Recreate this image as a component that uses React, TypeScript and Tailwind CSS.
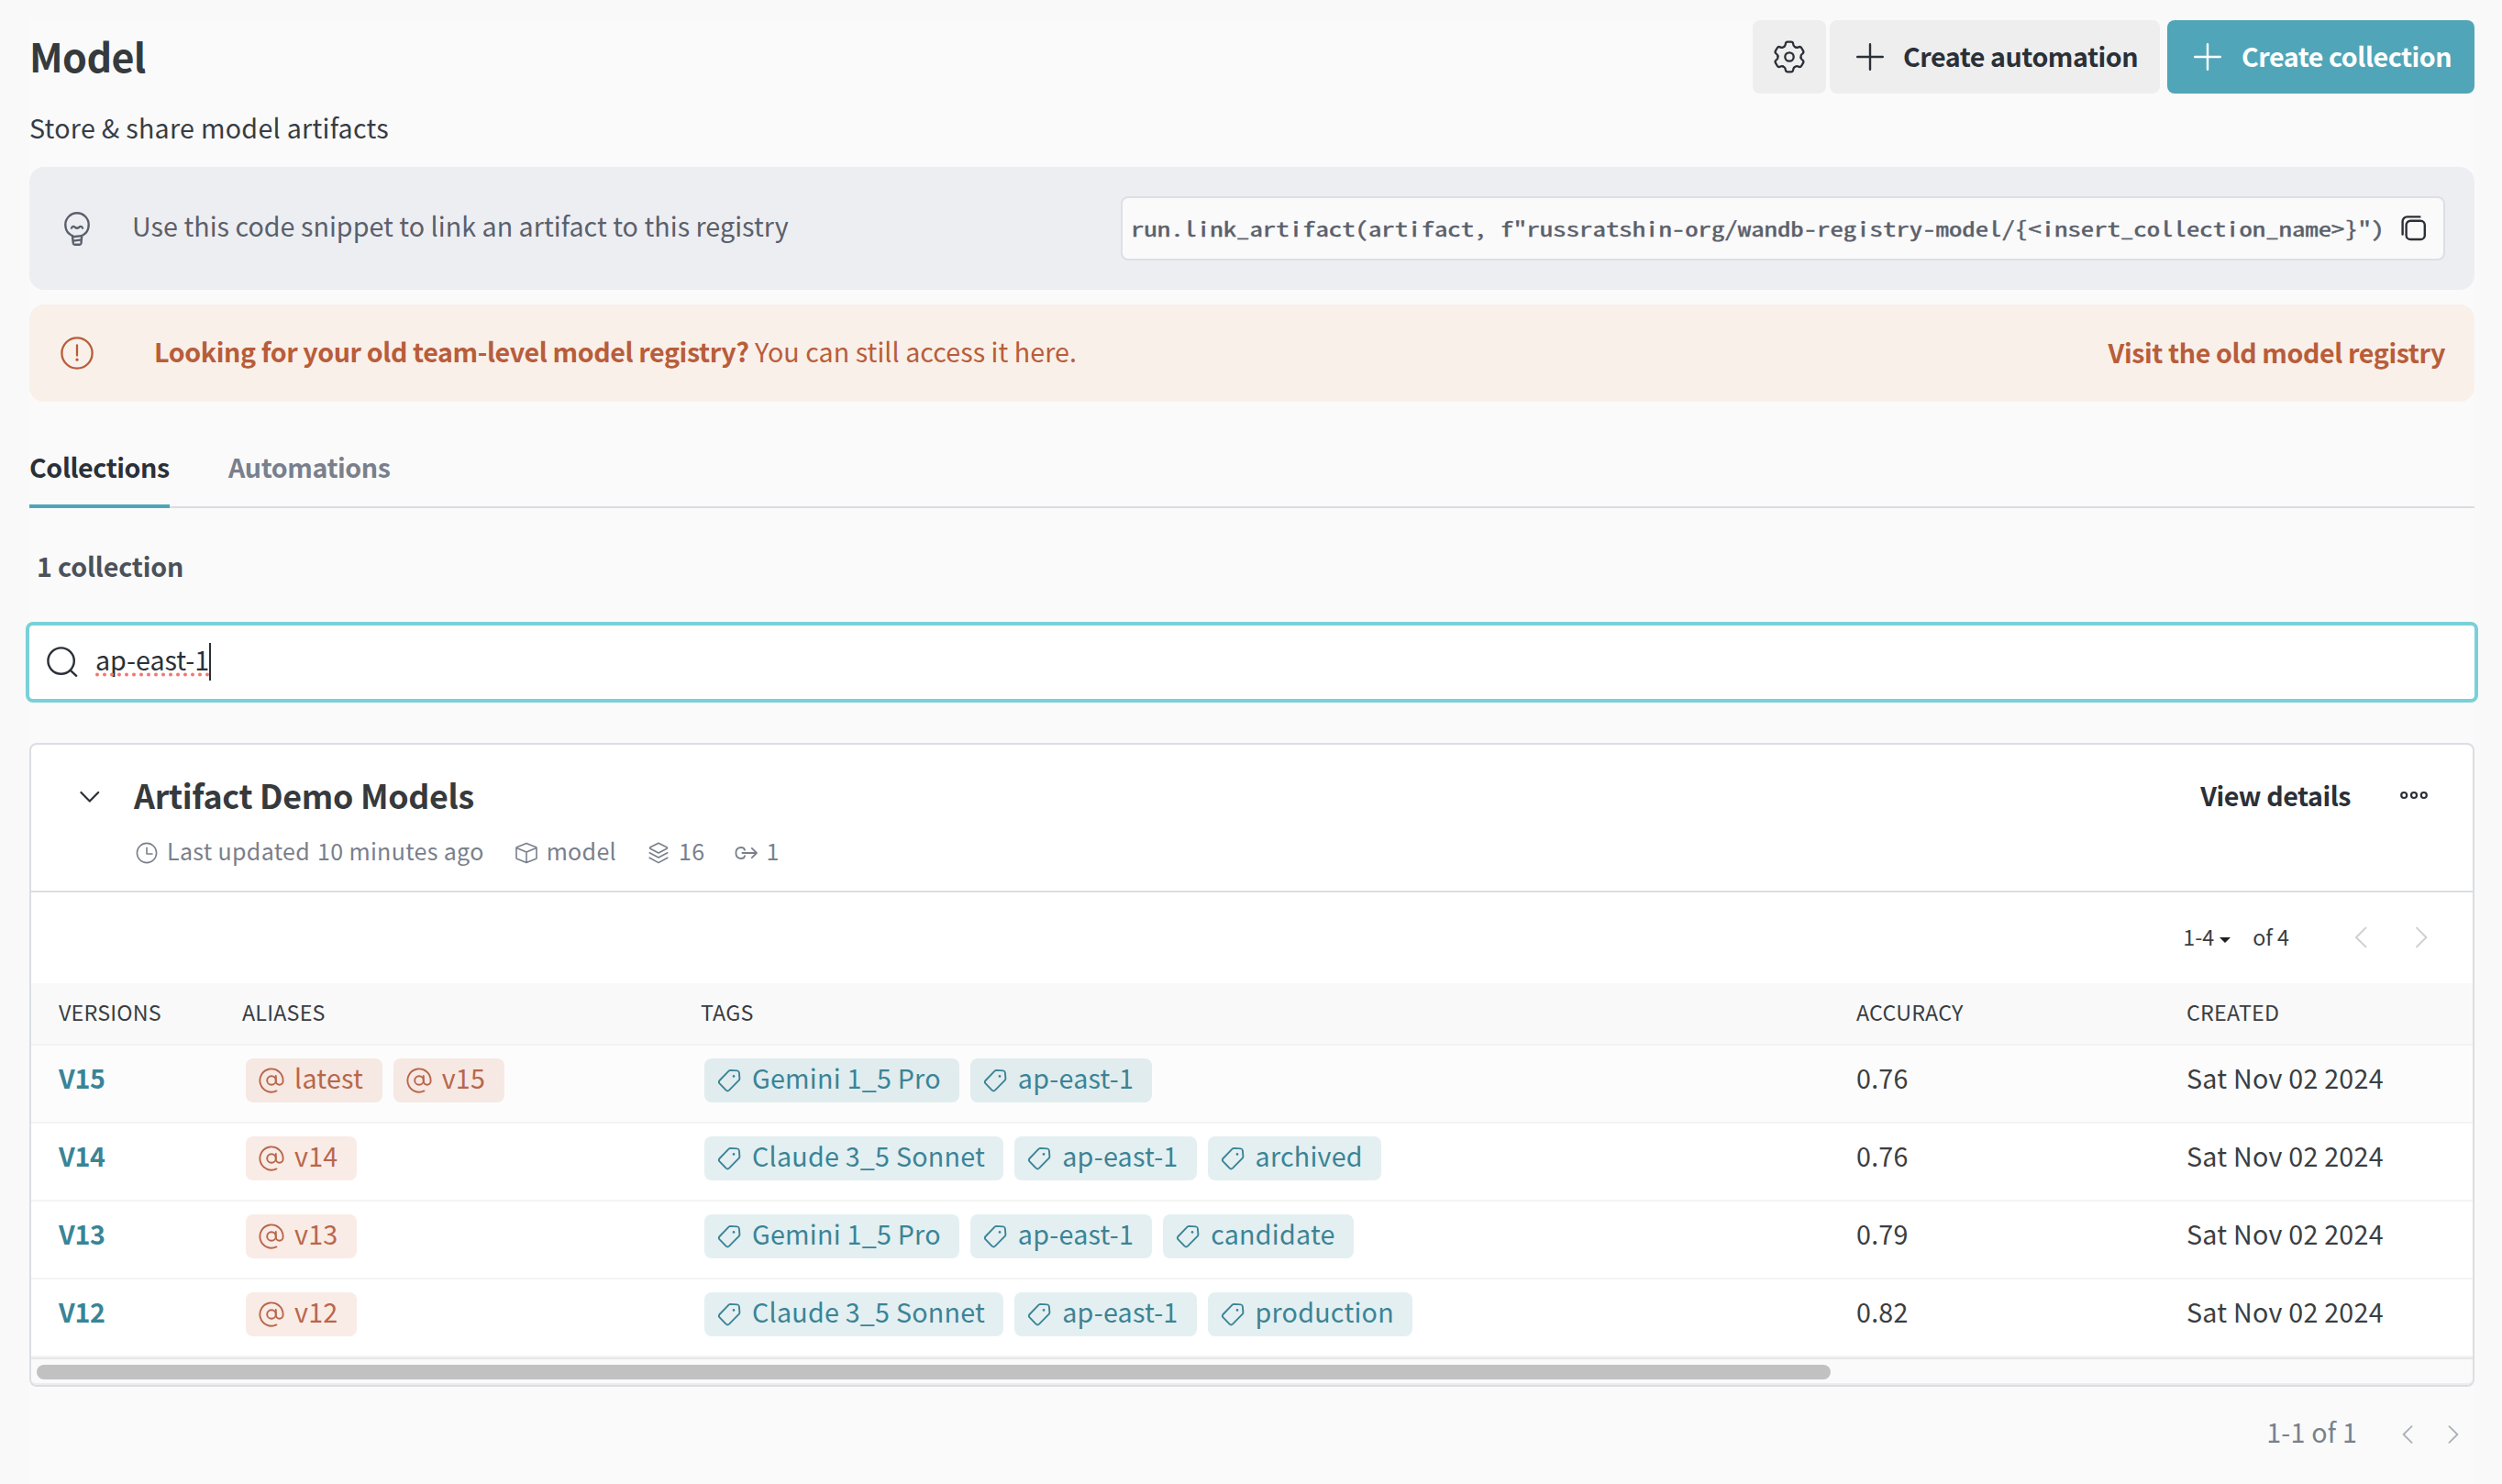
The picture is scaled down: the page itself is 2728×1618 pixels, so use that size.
import type { ReactNode } from "react"
import clsx from "clsx"

type Version = {
  name: string
  aliases: string[]
  tags: string[]
  accuracy: string
  created: string
}

const versions: Version[] = [
  {
    name: "V15",
    aliases: ["latest", "v15"],
    tags: ["Gemini 1_5 Pro", "ap-east-1"],
    accuracy: "0.76",
    created: "Sat Nov 02 2024",
  },
  {
    name: "V14",
    aliases: ["v14"],
    tags: ["Claude 3_5 Sonnet", "ap-east-1", "archived"],
    accuracy: "0.76",
    created: "Sat Nov 02 2024",
  },
  {
    name: "V13",
    aliases: ["v13"],
    tags: ["Gemini 1_5 Pro", "ap-east-1", "candidate"],
    accuracy: "0.79",
    created: "Sat Nov 02 2024",
  },
  {
    name: "V12",
    aliases: ["v12"],
    tags: ["Claude 3_5 Sonnet", "ap-east-1", "production"],
    accuracy: "0.82",
    created: "Sat Nov 02 2024",
  },
]

const columns = "grid grid-cols-[200px_500px_1260px_360px_1fr] pl-[30px]"

type IconProps = {
  w: number
  h: number
  stroke?: number
  className?: string
  children: ReactNode
}

const Icon = ({ w, h, stroke = 2, className, children }: IconProps) => (
  <svg
    width={w}
    height={h}
    viewBox={`0 0 ${w} ${h}`}
    fill="none"
    stroke="currentColor"
    strokeWidth={stroke}
    strokeLinecap="round"
    strokeLinejoin="round"
    className={clsx("shrink-0", className)}
  >
    {children}
  </svg>
)

const GearIcon = () => (
  <Icon w={36} h={36} stroke={2.3}>
    <g transform="translate(18 18)">
      <circle r="4.7" />
      {[0, 60, 120, 180, 240, 300].map((angle) => (
        <path
          key={angle}
          transform={`rotate(${angle})`}
          d="M-5.5-11.3Q-4.3-12.2-4.2-14Q-4-16.3-1.8-16.3H1.8Q4-16.3 4.2-14Q4.3-12.2 5.5-11.3Q6.3-10.9 7.04-10.4"
        />
      ))}
    </g>
  </Icon>
)

const PlusIcon = ({ className }: { className?: string }) => (
  <Icon w={30} h={30} stroke={2.4} className={className}>
    <path d="M15 1.2v27.6M1.2 15h27.6" />
  </Icon>
)

const BulbIcon = () => (
  <Icon w={28} h={38} stroke={2.4}>
    <path d="M9.2 27.2C4.6 25.2 1.3 20.6 1.3 15a12.7 12.7 0 0 1 25.4 0c0 5.6-3.3 10.2-7.9 12.2" />
    <path d="M8 18.7c.8-2.2 3-2.4 4-.7q2 1.4 4 0c1-1.7 3.2-1.5 4 .7" />
    <path d="M9 28l.8 7.2q.3 1.5 1.8 1.5h5.2q1.4 0 1.7-1.5l.6-7.2M9.2 28.3l9.8-1.2M9.8 32.6l9-1.2" />
  </Icon>
)

const AlertIcon = () => (
  <Icon w={38} h={38} stroke={2.3}>
    <circle cx="19" cy="19" r="16.6" />
    <path d="M19 10.5v11" />
    <circle cx="19" cy="26.2" r="1.6" fill="currentColor" stroke="none" />
  </Icon>
)

const CopyIcon = () => (
  <Icon w={30} h={30} stroke={2.4}>
    <rect x="6.6" y="6.8" width="20.2" height="20.2" rx="4.6" />
    <path d="M2.6 21.6V7.4a5 5 0 0 1 5-5h13.8" />
  </Icon>
)

const SearchIcon = () => (
  <Icon w={34} h={34} stroke={2.4}>
    <circle cx="15.6" cy="15.6" r="14.2" />
    <path d="M25.8 25.8l6.4 6" />
  </Icon>
)

const ClockIcon = () => (
  <Icon w={24} h={24} stroke={1.6}>
    <circle cx="12" cy="12" r="10.6" />
    <path d="M12 6.2V13h6" />
  </Icon>
)

const CubeIcon = () => (
  <Icon w={24} h={24} stroke={1.6}>
    <path d="M12 1.4l10.6 4.4q.4.2.4.8v10.8q0 .6-.4.8L12 22.6 1.4 18.2Q1 18 1 17.4V6.6q0-.6.4-.8zM1.3 6.4L12 11l10.7-4.6M12 11v11.4" />
  </Icon>
)

const StackIcon = () => (
  <Icon w={24} h={24} stroke={1.6}>
    <path d="M12 1.2l9 4.5q1 .8 0 1.6l-9 4.7-9-4.7q-1-.8 0-1.6zM2.2 11.8L12 17l9.8-5.2M2.2 17.2L12 22.6l9.8-5.4" />
  </Icon>
)

const LinkIcon = () => (
  <Icon w={26} h={24} stroke={1.8}>
    <path d="M8.4 12H24M18.8 6.8l5.2 5.2-5.2 5.2M11 8.8Q10.4 6 7.2 6Q1.4 6 1.4 12T7.2 18Q10.4 18 11 15.2" />
  </Icon>
)

const AtIcon = () => (
  <Icon w={28} h={28} stroke={1.9}>
    <circle cx="14" cy="14" r="4.8" />
    <path d="M18.8 9v5.8a3.9 3.9 0 0 0 7.8 0V14A12.6 12.6 0 1 0 19.4 25.4" />
  </Icon>
)

const TagIcon = () => (
  <Icon w={26} h={26} stroke={1.9}>
    <path d="M14.6 1.9l7.2.5q1.9.2 2.1 2.1l.5 6.4q0 1.2-.8 2L13 23.6q-1.7 1.6-3.4 0L2.6 16.4q-1.5-1.7 0-3.4L12.6 2.7q.8-.8 2-.8z" />
    <circle cx="18" cy="8.4" r="1.3" fill="currentColor" stroke="none" />
  </Icon>
)

const DotsIcon = () => (
  <Icon w={32} h={10} stroke={2.2}>
    <circle cx="5.2" cy="5" r="3" />
    <circle cx="16" cy="5" r="3" />
    <circle cx="26.8" cy="5" r="3" />
  </Icon>
)

const Chip = ({ icon, tone, children }: { icon: ReactNode; tone: "alias" | "tag"; children: ReactNode }) => (
  <span
    className={clsx(
      "flex h-12 items-center rounded-lg pl-3.5 leading-[41px]",
      tone === "alias" ? "bg-[#cd582f]/12 pr-[20.5px] text-[#b8664a]" : "bg-[#1e7a8a]/12 pr-5 text-[#3a8496]"
    )}
  >
    {icon}
    <span className={clsx("-mt-[7px]", tone === "alias" ? "ml-[11px]" : "ml-3")}>{children}</span>
  </span>
)

const Header = () => (
  <header className="flex h-20 justify-between">
    <h1 className="text-[43px] leading-[76px] font-semibold tracking-[-0.6px] text-[#363a3d]">Model</h1>
    <div className="flex text-[28.65px] leading-[77px] font-semibold tracking-[-0.45px] text-[#2b3038]">
      <button className="flex h-20 w-20 items-center justify-center rounded-lg bg-[#eee]">
        <GearIcon />
      </button>
      <button className="ml-1 flex h-20 w-[360px] rounded-lg bg-[#eee] pl-[29px]">
        <PlusIcon className="mt-[25px]" />
        <span className="ml-[21px] whitespace-nowrap">Create automation</span>
      </button>
      <button className="ml-2 flex h-20 w-[335px] rounded-lg bg-[#50a6b8] pl-[29px] text-white">
        <PlusIcon className="mt-[25px]" />
        <span className="ml-[22px] whitespace-nowrap">Create collection</span>
      </button>
    </div>
  </header>
)

const Snippet = () => (
  <section className="flex h-[134px] items-center rounded-2xl bg-[#edeef2] pl-[38px] pr-8 text-[#5a606b]">
    <BulbIcon />
    <span className="ml-[46px] -mt-[7px] leading-[41px] tracking-[0.04px]">
      Use this code snippet to link an artifact to this registry
    </span>
    <div className="ml-auto flex h-[70px] w-[1444px] items-center rounded-lg border-2 border-[#dcdfe4] bg-[#fafafa] pl-[9px]">
      <code className="-mt-0.5 origin-left scale-x-[1.285] font-['Noto_Sans_Mono_CJK_SC','DejaVu_Sans_Mono',monospace] text-[22.4px] leading-[40px] whitespace-nowrap [-webkit-text-stroke:0.4px]">
        {'run.link_artifact(artifact, f"russratshin-org/wandb-registry-model/{<insert_collection_name>}")'}
      </code>
      <span className="ml-auto mr-[17px] text-[#2b3038]">
        <CopyIcon />
      </span>
    </div>
  </section>
)

const OldRegistry = () => (
  <section className="mt-4 flex h-[106px] items-center rounded-2xl bg-[#f9f0ea] pl-[33px] pr-8 text-[#b85d3a]">
    <AlertIcon />
    <p className="ml-[65px] -mt-[5px] leading-[41px] tracking-[0.05px]">
      <strong className="font-semibold tracking-[-0.4px]">Looking for your old team-level model registry?</strong> You can
      still access it here.
    </p>
    <a className="ml-auto -mt-[4px] leading-[41px] font-semibold tracking-[-0.4px]">Visit the old model registry</a>
  </section>
)

const Tabs = () => (
  <nav className="mt-[46px] flex h-[70px] gap-16 border-b-2 border-[#d9dde2] leading-[49px] font-semibold tracking-[-0.42px]">
    <a className="h-[70px] w-[153px] border-b-4 border-[#4ea5b7] whitespace-nowrap text-[#2b3038]">Collections</a>
    <a className="text-[#79808c]">Automations</a>
  </nav>
)

const SearchBox = () => (
  <div className="-mx-1 flex h-[88px] rounded-lg border-4 border-[#79d0d8] bg-white pl-[19px] text-[#2b3038]">
    <span className="mt-[23px]">
      <SearchIcon />
    </span>
    <span className="relative ml-[19px] h-20 leading-[73px]">
      ap-east-1
      <svg width="126" height="5" className="absolute top-[51px] left-0">
        <path d="M2 2.5h124" stroke="#f2776d" strokeWidth="4" strokeLinecap="round" strokeDasharray="0 8" />
      </svg>
      <span className="absolute top-[19px] right-[-2px] h-[41px] w-0.5 bg-[#2b3038]" />
    </span>
  </div>
)

const VersionTable = () => (
  <div className="text-[#3a3e42]">
    <div
      className={clsx(
        columns,
        "h-[68px] border-b-2 border-[#f3f3f4] bg-[#f9f9f9] text-[23.3px] leading-[63px] tracking-[0.2px]"
      )}
    >
      <span>VERSIONS</span>
      <span>ALIASES</span>
      <span>TAGS</span>
      <span>ACCURACY</span>
      <span>CREATED</span>
    </div>
    {versions.map((version, index) => (
      <div
        key={version.name}
        className={clsx(
          columns,
          "h-[85px] border-b-2 border-[#f3f3f4] leading-[69px] tracking-[0.25px]",
          index === 0 && "bg-[#fcfcfc]"
        )}
      >
        <span className="font-semibold tracking-[-0.3px] text-[#3a8496]">{version.name}</span>
        <div className="flex gap-3 pt-3.5 pl-1">
          {version.aliases.map((alias) => (
            <Chip key={alias} tone="alias" icon={<AtIcon />}>
              {alias}
            </Chip>
          ))}
        </div>
        <div className="flex gap-3 pt-3.5 pl-1">
          {version.tags.map((tag) => (
            <Chip key={tag} tone="tag" icon={<TagIcon />}>
              {tag}
            </Chip>
          ))}
        </div>
        <span>{version.accuracy}</span>
        <span>{version.created}</span>
      </div>
    ))}
    <div className="h-[30px] rounded-b-md border-y-2 border-t-[#e8e8e8] border-b-[#ececec] bg-[#fafafa] pt-1.5 pl-1.5">
      <div className="h-4 w-[1956px] rounded-full bg-[#c1c1c1]" />
    </div>
  </div>
)

const CollectionCard = () => (
  <section className="mt-11 h-[702px] rounded-lg border-2 border-[#dadee3] bg-white">
    <div className="flex h-[161px] border-b-2 border-[#dadee3] pl-[52px] pr-12">
      <Icon w={24} h={14} stroke={2.2} className="mt-[50px] text-[#2b3038]">
        <path d="M2.4 2l9.4 9.6L21.2 2" />
      </Icon>
      <div className="ml-[36px] pt-6">
        <h2 className="text-[35.8px] leading-[60px] font-semibold tracking-[-0.3px] text-[#363a3d]">Artifact Demo Models</h2>
        <div className="mt-[11px] flex text-[25px] leading-10 tracking-[0.33px] text-[#79808c]">
          <span className="mt-[11px] ml-[2px]">
            <ClockIcon />
          </span>
          <span className="ml-[10px]">Last updated</span>
          <span className="ml-2">10 minutes ago</span>
          <span className="mt-[11px] ml-[34px]">
            <CubeIcon />
          </span>
          <span className="ml-[10px]">model</span>
          <span className="mt-[11px] ml-[34px]">
            <StackIcon />
          </span>
          <span className="ml-[10px]">16</span>
          <span className="mt-[11px] ml-[33px]">
            <LinkIcon />
          </span>
          <span className="ml-[8px]">1</span>
        </div>
      </div>
      <div className="ml-auto flex leading-[109px] font-semibold tracking-[-0.45px] text-[#2b3038]">
        View details
        <span className="mt-[50px] ml-[53px]">
          <DotsIcon />
        </span>
      </div>
    </div>
    <div className="flex h-[99px] justify-end pr-[48px] text-[23.3px] leading-[97px] text-[#3a3e42]">
      <span>1-4</span>
      <span className="mt-[49px] ml-[6px] h-0 w-0 border-x-[6px] border-t-[6px] border-x-transparent border-t-[#1d1f21]" />
      <span className="ml-[24px]">of 4</span>
      <Icon w={16} h={26} stroke={2} className="mt-9 ml-[70px] text-[#cfd0d2]">
        <path d="M13.4 2.6L3 13l10.4 10.4" />
      </Icon>
      <Icon w={16} h={26} stroke={2} className="mt-9 ml-[50px] text-[#cfd0d2]">
        <path d="M3 2.6L13.4 13 3 23.4" />
      </Icon>
    </div>
    <VersionTable />
  </section>
)

const Footer = () => (
  <footer className="flex justify-end pr-4 leading-[97px] tracking-[0.2px] text-[#79808c]">
    <span>1-1 of 1</span>
    <Icon w={14} h={22} stroke={1.8} className="mt-[41px] ml-12 text-[#abb0b8]">
      <path d="M11.6 2.2L2.6 11l9 8.8" />
    </Icon>
    <Icon w={14} h={22} stroke={1.8} className="mt-[41px] ml-[36px] text-[#abb0b8]">
      <path d="M2.4 2.2l9 8.8-9 8.8" />
    </Icon>
  </footer>
)

const App = () => (
  <main className="h-[1618px] w-[2728px] overflow-hidden bg-[#f9f9f9] pt-[22px] pr-[30px] pl-8 font-['Noto_Sans_CJK_SC',sans-serif] text-[28.65px]">
    <div className="h-full bg-[#fafafa]">
      <Header />
      <p className="h-20 leading-[73px] tracking-[0.28px] text-[#363c44]">Store &amp; share model artifacts</p>
      <Snippet />
      <OldRegistry />
      <Tabs />
      <p className="h-[124px] pl-2 leading-[125px] font-semibold tracking-[-0.15px] text-[#4b5159]">1 collection</p>
      <SearchBox />
      <CollectionCard />
      <Footer />
    </div>
  </main>
)

export default App
